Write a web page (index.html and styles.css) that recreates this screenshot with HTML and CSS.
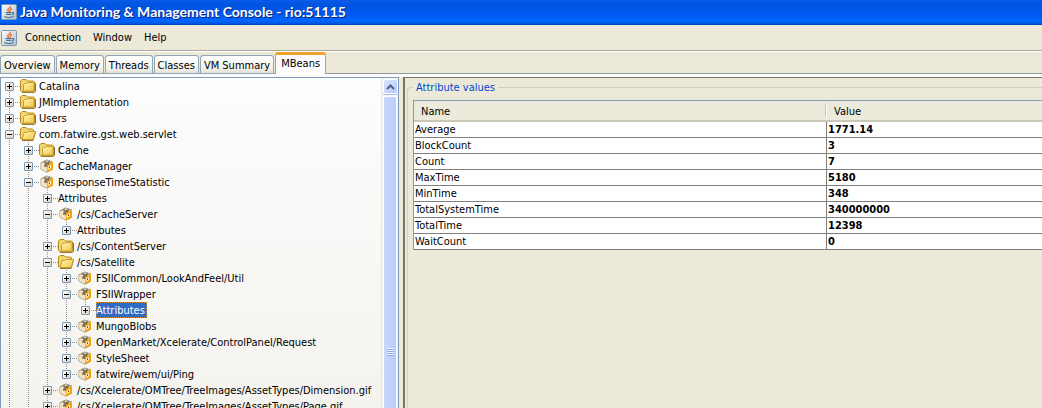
FILE: index.html
```html
<!DOCTYPE html>
<html lang="en">
<head>
<meta charset="utf-8">
<title>Java Monitoring &amp; Management Console</title>
<link rel="stylesheet" href="styles.css">
</head>
<body>
<svg class="defs" aria-hidden="true">
  <defs>
    <linearGradient id="gold" x1="0" y1="0" x2="1" y2="1"><stop offset="0" stop-color="#fff6b8"/><stop offset="1" stop-color="#f0c648"/></linearGradient>
    <linearGradient id="steel" x1="0" y1="0" x2="1" y2="1"><stop offset="0" stop-color="#ffffff"/><stop offset="1" stop-color="#a9bccd"/></linearGradient>
  </defs>
  <symbol id="java" viewBox="0 0 16 16">
    <rect x=".5" y=".5" width="15" height="15" rx="1" fill="url(#steel)" stroke="#7d98b0"/>
    <path d="M9.500 2C10 4 6 4.600 6.700 6.300L8 8M11 4.500C9 5.300 8.500 6.200 9.500 7.600" fill="none" stroke="#e8762c" stroke-width="1.400"/>
    <path d="M4.500 8.700h6M5.200 10.500h5M11 8.500c2.300-.3 2 1.700 0 2.200M3.300 12.500c2 1 6.500 1 9.200 0" fill="none" stroke="#47718f" stroke-width="1.200"/>
  </symbol>
  <symbol id="folder" viewBox="0 0 16 14">
    <path d="M2 13.500h12l1.500-1V4" fill="none" stroke="#8f7535"/>
    <path d="M.5 11.500V2L2 .5h4L7.500 2h6l1 1v9l-1 .8H2z" fill="#f5d66c" stroke="#b58a1e"/>
    <path d="M3.500 12V5.500l1-1h2l1-1h5.500l1 1V12z" fill="url(#gold)" stroke="#c89c2b"/>
  </symbol>
  <symbol id="open" viewBox="0 0 16 14">
    <path d="M2 13.500h11l2.500-8" fill="none" stroke="#8f7535"/>
    <path d="M.5 11.500V2L2 .5h4L7.500 2h5l1 1v9H2z" fill="#f5d66c" stroke="#b58a1e"/>
    <path d="M2 12.500L4 5.500h3l1-1h7.500L13 12.500z" fill="url(#gold)" stroke="#c89c2b"/>
  </symbol>
  <symbol id="bean" viewBox="0 0 14 14">
    <path d="M6.500 1l6 1.800v7.400l-5.500 3-6-3V3.800z" fill="#e9dcc0" stroke="#9a8763" stroke-width=".9"/>
    <path d="M7 5.500l6-2.700v7.600L7 13.500z" fill="#f5a10c"/>
    <path d="M1.200 4L6.500 6v6.800l-5.300-2.800z" fill="#f3e4c3"/>
    <path d="M2.500 3.200l4-1.800 5 1.500-4.500 2.300z" fill="#cfc4ac"/>
    <path d="M4 2.500l5 3M10 2.700L5 6v2" fill="none" stroke="#6d624f" stroke-width="1.400"/>
    <path d="M8.300 11V7.200l2.200-1v3L8.300 10" fill="none" stroke="#fff0bf" stroke-width="1"/>
    <path d="M9.500 7.500v1.500M6.500 6v2" stroke="#7c5a1c" stroke-width="1"/>
  </symbol>
</svg>

<header class="titlebar"><svg class="java"><use href="#java"/></svg><h1>Java Monitoring &amp; Management Console - rio:51115</h1></header>
<nav class="menubar"><svg class="java"><use href="#java"/></svg><button>Connection</button><button>Window</button><button>Help</button></nav>
<div class="tabs" role="tablist">
  <button role="tab">Overview</button><button role="tab">Memory</button><button role="tab">Threads</button><button role="tab">Classes</button><button role="tab">VM Summary</button><button role="tab" class="active" aria-selected="true">MBeans</button>
</div>

<main class="split">
  <section class="treepane" aria-label="MBeans">
    <ul class="tree">
      <li class="first"><div class="row"><button class="plus" aria-label="Expand"></button><i></i><svg><use href="#folder"/></svg><span>Catalina</span></div></li>
      <li><div class="row"><button class="plus" aria-label="Expand"></button><i></i><svg><use href="#folder"/></svg><span>JMImplementation</span></div></li>
      <li><div class="row"><button class="plus" aria-label="Expand"></button><i></i><svg><use href="#folder"/></svg><span>Users</span></div></li>
      <li><div class="row"><button aria-label="Collapse"></button><i></i><svg><use href="#open"/></svg><span>com.fatwire.gst.web.servlet</span></div>
        <ul>
          <li><div class="row"><button class="plus" aria-label="Expand"></button><i></i><svg><use href="#folder"/></svg><span>Cache</span></div></li>
          <li><div class="row"><button class="plus" aria-label="Expand"></button><i></i><svg><use href="#bean"/></svg><span>CacheManager</span></div></li>
          <li><div class="row"><button aria-label="Collapse"></button><i></i><svg><use href="#bean"/></svg><span>ResponseTimeStatistic</span></div>
            <ul>
              <li><div class="row"><button class="plus" aria-label="Expand"></button><i></i><span>Attributes</span></div></li>
              <li><div class="row"><button aria-label="Collapse"></button><i></i><svg><use href="#bean"/></svg><span>/cs/CacheServer</span></div>
                <ul><li class="last"><div class="row"><button class="plus" aria-label="Expand"></button><i></i><span>Attributes</span></div></li></ul>
              </li>
              <li><div class="row"><button class="plus" aria-label="Expand"></button><i></i><svg><use href="#folder"/></svg><span>/cs/ContentServer</span></div></li>
              <li><div class="row"><button aria-label="Collapse"></button><i></i><svg><use href="#open"/></svg><span>/cs/Satellite</span></div>
                <ul>
                  <li><div class="row"><button class="plus" aria-label="Expand"></button><i></i><svg><use href="#bean"/></svg><span>FSIICommon/LookAndFeel/Util</span></div></li>
                  <li><div class="row"><button aria-label="Collapse"></button><i></i><svg><use href="#bean"/></svg><span>FSIIWrapper</span></div>
                    <ul><li class="last"><div class="row"><button class="plus" aria-label="Expand"></button><i></i><span class="selected">Attributes</span></div></li></ul>
                  </li>
                  <li><div class="row"><button class="plus" aria-label="Expand"></button><i></i><svg><use href="#bean"/></svg><span>MungoBlobs</span></div></li>
                  <li><div class="row"><button class="plus" aria-label="Expand"></button><i></i><svg><use href="#bean"/></svg><span>OpenMarket/Xcelerate/ControlPanel/Request</span></div></li>
                  <li><div class="row"><button class="plus" aria-label="Expand"></button><i></i><svg><use href="#bean"/></svg><span>StyleSheet</span></div></li>
                  <li class="last"><div class="row"><button class="plus" aria-label="Expand"></button><i></i><svg><use href="#bean"/></svg><span>fatwire/wem/ui/Ping</span></div></li>
                </ul>
              </li>
              <li><div class="row"><button class="plus" aria-label="Expand"></button><i></i><svg><use href="#bean"/></svg><span>/cs/Xcelerate/OMTree/TreeImages/AssetTypes/Dimension.gif</span></div></li>
              <li><div class="row"><button class="plus" aria-label="Expand"></button><i></i><svg><use href="#bean"/></svg><span>/cs/Xcelerate/OMTree/TreeImages/AssetTypes/Page.gif</span></div></li>
            </ul>
          </li>
        </ul>
      </li>
    </ul>
    <div class="scrollbar">
      <button class="up" aria-label="Scroll up"><svg viewBox="0 0 9 6"><path d="M1 5l3.500-3.500L8 5" fill="none" stroke="#4d6185" stroke-width="2"/></svg></button>
      <div class="thumb"><div class="grip"></div></div>
    </div>
  </section>
  <section class="detail">
    <fieldset>
      <legend>Attribute values</legend>
      <table>
        <colgroup><col class="name"><col></colgroup>
        <thead><tr><th scope="col">Name</th><th scope="col">Value</th></tr></thead>
        <tbody>
          <tr><td>Average</td><td>1771.14</td></tr>
          <tr><td>BlockCount</td><td>3</td></tr>
          <tr><td>Count</td><td>7</td></tr>
          <tr><td>MaxTime</td><td>5180</td></tr>
          <tr><td>MinTime</td><td>348</td></tr>
          <tr><td>TotalSystemTime</td><td>340000000</td></tr>
          <tr><td>TotalTime</td><td>12398</td></tr>
          <tr><td>WaitCount</td><td>0</td></tr>
        </tbody>
      </table>
    </fieldset>
  </section>
</main>
</body>
</html>
```
FILE: styles.css
```css
* { box-sizing: border-box; }
body {
  margin: 0;
  height: 100vh;
  display: flex;
  flex-direction: column;
  overflow: hidden;
  background: #ece9d8;
  color: #000;
  font: 11px/16px "DejaVu Sans Condensed", "Noto Sans", sans-serif;
}
button { font: inherit; color: inherit; border: 0; background: none; padding: 0; }
.defs { position: absolute; width: 0; height: 0; }
.java { width: 16px; height: 16px; flex: none; }

.titlebar {
  flex: none;
  height: 25px;
  padding: 0 1px 1px;
  display: flex;
  align-items: center;
  gap: 3px;
  background: linear-gradient(#0a5ce8, #0054e0 20%, #0058ee 55%, #0066ff 85%, #0050d8 96%, #003cb4);
}
h1 {
  margin: 0;
  color: #fff;
  font: bold 14px/20px Lato, "Open Sans", sans-serif;
  text-shadow: 1px 1px 0 #0a1f80;
  white-space: nowrap;
}
.menubar {
  flex: none;
  height: 27px;
  padding: 0 1px 1px;
  display: flex;
  align-items: center;
  gap: 12px;
  border-bottom: 1px solid #fff;
  box-shadow: inset 0 -1px #aca899;
}
.menubar .java { margin-right: -4px; }

.tabs {
  flex: none;
  height: 22px;
  display: flex;
  align-items: flex-end;
  gap: 1px;
  box-shadow: inset 0 -1px #919b9c;
}
.tabs button {
  height: 19px;
  padding: 2px 3px 0 4px;
  white-space: nowrap;
  border: 1px solid #91a7b4;
  border-left-width: 0;
  box-shadow: inset 1px 0 #91a7b4;
  border-radius: 3px 3px 0 0;
  background: linear-gradient(#fff, #f3f3ee 70%, #e4e2d8);
}
.tabs .active {
  height: 22px;
  padding: 0 5px 2px 6px;
  border-top: 3px solid #f0a32c;
  border-bottom: 0;
  background: #fcfcfe;
}

.split {
  flex: 1;
  min-height: 0;
  display: grid;
  grid-template-columns: 399px 1fr;
  column-gap: 4px;
  border-top: 3px solid #fcfcfe;
}
.treepane {
  min-height: 0;
  display: flex;
  overflow: hidden;
  border: 1px solid #7f9db9;
  border-bottom: 0;
  background: linear-gradient(#fdfdfe, #f4f3ee);
}
.tree { flex: 1; min-width: 0; overflow: hidden; }
ul { margin: 0; padding: 0; list-style: none; }
ul ul { margin-left: 19px; }
li {
  background: repeating-linear-gradient(#909090 0 1px, transparent 1px 2px) 8px 0 / 1px 100% no-repeat;
}
li.first { background-position: 8px 8px; }
li.last { background-size: 1px 8px; }
.row { height: 16px; display: flex; align-items: center; white-space: nowrap; }
.row button {
  flex: none;
  width: 9px;
  height: 9px;
  margin-left: 4px;
  border: 1px solid #7898b5;
  border-radius: 1px;
  background:
    linear-gradient(#000, #000) center / 5px 1px no-repeat,
    linear-gradient(135deg, #fff, #d8d2c4);
}
.row .plus {
  background:
    linear-gradient(#000, #000) center / 5px 1px no-repeat,
    linear-gradient(#000, #000) center / 1px 5px no-repeat,
    linear-gradient(135deg, #fff, #d8d2c4);
}
.row i {
  flex: none;
  width: 6px;
  height: 1px;
  background: repeating-linear-gradient(90deg, transparent 0 1px, #909090 1px 2px);
}
.row svg { flex: none; width: 16px; height: 14px; margin-right: 3px; }
.row span { height: 16px; line-height: 17px; }
.row .selected { padding-right: 2px; background: #316ac5; color: #fff; outline: 1px dotted #d89028; outline-offset: -1px; }

.scrollbar {
  flex: none;
  width: 17px;
  padding: 1px;
  background: #f5f5f1;
  border-left: 1px solid #e8e7df;
}
.up {
  display: grid;
  place-items: center;
  width: 15px;
  height: 15px;
  border: 1px solid #fff;
  border-radius: 2px;
  background: linear-gradient(135deg, #dce7ff, #b5c9f8);
  box-shadow: 0 1px #a5bbe8;
}
.up svg { width: 9px; height: 6px; }
.thumb {
  height: 512px;
  margin-top: 2px;
  display: grid;
  place-items: center;
  border: 1px solid #fff;
  border-radius: 2px;
  background: linear-gradient(90deg, #c8d8fc, #b9cdfb);
}
.grip { width: 7px; height: 8px; background: repeating-linear-gradient(#eef4fe 0 1px, #8cb0f0 1px 2px); }

.detail {
  min-width: 0;
  overflow: hidden;
  border: solid #76746a;
  border-width: 1px 0 0 2px;
}
fieldset {
  margin: 1px 0 0 2px;
  padding: 5px 0 0 5px;
  min-width: 0;
  height: 100%;
  border: 1px solid #d0d0bf;
  border-right: 0;
  border-radius: 4px 0 0 0;
}
legend { height: 16px; padding: 0 3px; line-height: 17px; color: #0046d5; }
table {
  width: 100%;
  table-layout: fixed;
  border-collapse: separate;
  border-spacing: 0;
  border: solid #7f9db9;
  border-width: 1px 0 0 1px;
}
.name { width: 413px; }
th, td { text-align: left; white-space: nowrap; }
th {
  height: 21px;
  padding: 2px 7px 0;
  font-weight: normal;
  border-bottom: 2px solid #cbc7b8;
  background:
    linear-gradient(#c7c5b2, #c7c5b2) calc(100% - 1px) 2px / 1px 14px no-repeat,
    linear-gradient(#fff, #fff) 100% 2px / 1px 14px no-repeat,
    #ebeadb;
}
th:last-child, td:last-child { border-right: 0; }
th:last-child { background: #ebeadb; }
td {
  height: 16px;
  padding: 0 1px;
  line-height: 15px;
  background: #fff;
  border-right: 1px solid #808080;
  border-bottom: 1px solid #808080;
}
td + td { font-weight: bold; }
```
